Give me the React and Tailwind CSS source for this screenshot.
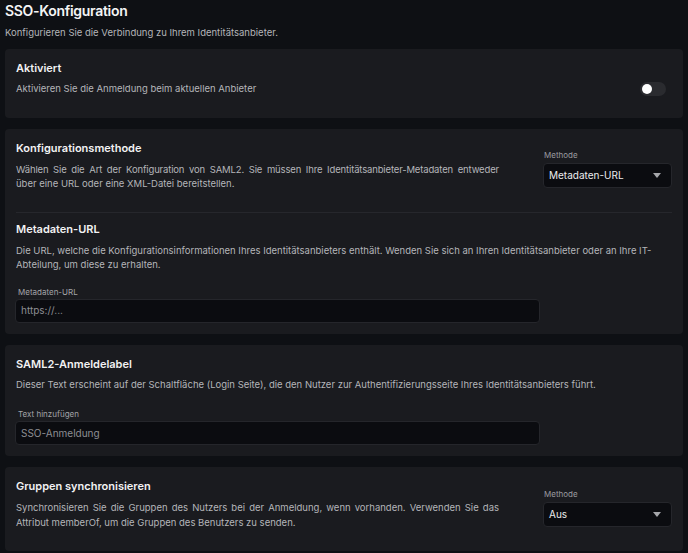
import React, { useState } from "react";

const font = { fontFamily: "Inter, 'Noto Sans', sans-serif" };

const Toggle = () => {
  const [on, setOn] = useState(false);
  return (
    <button
      onClick={() => setOn(!on)}
      className={`w-[26px] h-[14px] rounded-full p-[2px] flex items-center ${
        on ? "bg-[#4f7cff] justify-end" : "bg-[#2a2b2f] justify-start"
      }`}
    >
      <span className="block w-[10px] h-[10px] rounded-full bg-white" />
    </button>
  );
};

const Select = ({ value }) => (
  <div className="w-[129px] shrink-0 mt-[6px]">
    <div className="text-[8px] leading-[12px] text-[#9a9ba0] pl-[1px] mb-[2px]">Methode</div>
    <div className="h-[25px] bg-[#0b0c10] border border-[#25262b] rounded-[4px] flex items-center justify-between px-[5px]">
      <span className="text-[10px] text-[#ececee]">{value}</span>
      <svg width="8" height="5" viewBox="0 0 8 5" className="mr-[5px]">
        <path d="M0 0 L8 0 L4 5 Z" fill="#a6a7ab" />
      </svg>
    </div>
  </div>
);

const Field = ({ label, placeholder, value }) => (
  <div className="w-[525px] -ml-[1px]">
    <div className="text-[8px] leading-[12px] text-[#a3a4a8] pl-[3px] mb-[1px]">{label}</div>
    <div className="h-[24px] bg-[#0b0c10] border border-[#25262b] rounded-[4px] flex items-center px-[5px]">
      <span className="text-[10px] text-[#8d8e93]">{value || placeholder}</span>
    </div>
  </div>
);

const Heading = ({ children }) => (
  <h2 className="text-[11px] leading-[16px] font-semibold text-[#f2f2f3]">{children}</h2>
);

const Desc = ({ children, className = "" }) => (
  <p className={`text-[9.5px] leading-[14.5px] text-[#b4b5b9] ${className}`}>{children}</p>
);

const JustLine = ({ children, className = "" }) => (
  <span className={`block text-justify [text-align-last:justify] ${className}`}>{children}</span>
);

export default function App() {
  return (
    <div className="min-h-[553px] bg-[#0e1014] px-[5px] pt-[1px]" style={font}>
      <h1 className="text-[14px] leading-[20px] font-semibold tracking-[-0.3px] text-[#f4f4f5]">SSO-Konfiguration</h1>
      <p className="text-[9.5px] leading-[14px] text-[#b4b5b9] mt-[5px]">
        Konfigurieren Sie die Verbindung zu Ihrem Identitätsanbieter.
      </p>

      <div className="mt-[9px] flex flex-col gap-[11px]">
        <section className="bg-[#1a1b1f] rounded-[4px] px-[11px] pt-[11px] pb-[21px]">
          <Heading>Aktiviert</Heading>
          <div className="mt-[6px] flex items-center justify-between">
            <Desc>Aktivieren Sie die Anmeldung beim aktuellen Anbieter</Desc>
            <div className="mr-[6px]">
              <Toggle />
            </div>
          </div>
        </section>

        <section className="bg-[#1a1b1f] rounded-[4px] px-[11px] pt-[11px] pb-[11px]">
          <div className="flex items-center gap-[44px] pb-[20px] border-b border-[#26272c]">
            <div className="flex-1">
              <Heading>Konfigurationsmethode</Heading>
              <Desc className="mt-[7px]">
                <JustLine className="tracking-[-0.15px]">
                  Wählen Sie die Art der Konfiguration von SAML2. Sie müssen Ihre Identitätsanbieter-Metadaten entweder
                </JustLine>
                <span className="block">über eine URL oder eine XML-Datei bereitstellen.</span>
              </Desc>
            </div>
            <Select value="Metadaten-URL" />
          </div>
          <div className="pt-[8px]">
            <Heading>Metadaten-URL</Heading>
            <Desc className="mt-[7px]">
              Die URL, welche die Konfigurationsinformationen Ihres Identitätsanbieters enthält. Wenden Sie sich an Ihren Identitätsanbieter oder an Ihre IT-Abteilung, um diese zu erhalten.
            </Desc>
            <div className="mt-[13px]">
              <Field label="Metadaten-URL" placeholder="https://..." />
            </div>
          </div>
        </section>

        <section className="bg-[#1a1b1f] rounded-[4px] px-[11px] pt-[11px] pb-[11px]">
          <Heading>SAML2-Anmeldelabel</Heading>
          <Desc className="mt-[6px]">
            Dieser Text erscheint auf der Schaltfläche (Login Seite), die den Nutzer zur Authentifizierungsseite Ihres Identitätsanbieters führt.
          </Desc>
          <div className="mt-[16px]">
            <Field label="Text hinzufügen" value="SSO-Anmeldung" />
          </div>
        </section>

        <section className="bg-[#1a1b1f] rounded-[4px] px-[11px] pt-[11px] pb-[21px]">
          <div className="flex items-center gap-[44px]">
            <div className="flex-1">
              <Heading>Gruppen synchronisieren</Heading>
              <Desc className="mt-[7px]">
                <JustLine>
                  Synchronisieren Sie die Gruppen des Nutzers bei der Anmeldung, wenn vorhanden. Verwenden Sie das
                </JustLine>
                <span className="block">Attribut memberOf, um die Gruppen des Benutzers zu senden.</span>
              </Desc>
            </div>
            <Select value="Aus" />
          </div>
        </section>
      </div>
    </div>
  );
}
